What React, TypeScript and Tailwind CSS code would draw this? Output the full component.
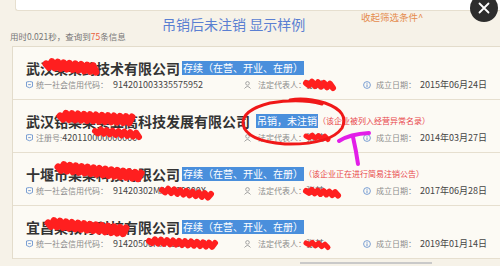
import React from "react";

type Row = {
  name: string;
  tag: string;
  note?: string;
  idLabel: string;
  id: string;
  date: string;
};

const rows: Row[] = [
  {
    name: "武汉某某药技术有限公司",
    tag: "存续（在营、开业、在册）",
    idLabel: "统一社会信用代码：",
    id: "914201003335575952",
    date: "2015年06月24日",
  },
  {
    name: "武汉铭某某实业高科技发展有限公司",
    tag: "吊销，未注销",
    note: "（该企业被列入经营异常名录）",
    idLabel: "注册号: ",
    id: "420110000000000",
    date: "2014年03月27日",
  },
  {
    name: "十堰市某某科技有限公司",
    tag: "存续（在营、开业、在册）",
    note: "（该企业正在进行简易注销公告）",
    idLabel: "统一社会信用代码：",
    id: "91420302MA4000000X",
    date: "2017年06月28日",
  },
  {
    name: "宜昌某教育科技有限公司",
    tag: "存续（在营、开业、在册）",
    idLabel: "统一社会信用代码：",
    id: "91420500MA4000000X",
    date: "2019年01月14日",
  },
];

function zig(x1: number, y1: number, x2: number, y2: number, a: number, step = 3) {
  const n = Math.max(2, Math.round((x2 - x1) / step));
  let d = `M${x1} ${y1}`;
  for (let i = 1; i <= n; i++) {
    const t = i / n;
    const x = x1 + (x2 - x1) * t;
    const y = y1 + (y2 - y1) * t + (i % 2 === 0 ? -a : a);
    d += ` L${x.toFixed(1)} ${y.toFixed(1)}`;
  }
  return d;
}

const scribbles: [string, number][] = [
  [zig(46, 64, 96, 69, 3), 7],
  [zig(306, 83, 333, 86, 2), 6],
  [zig(60, 116, 132, 120, 3), 7],
  [zig(95, 131, 139, 135, 2), 6],
  [zig(306, 136, 328, 138, 1.5), 5],
  [zig(58, 167, 141, 176, 3), 7],
  [zig(162, 190, 211, 196, 2), 6],
  [zig(306, 191, 338, 194, 1.5), 6],
  [zig(48, 223, 126, 231, 3), 7],
  [zig(149, 241, 215, 245, 2), 6],
  [zig(306, 243, 328, 246, 1.5), 5],
];

function IdIcon() {
  return (
    <svg width="7" height="8" viewBox="0 0 7 8" className="shrink-0">
      <path d="M0.5 1 L3.5 0.5 L6.5 1 L6.5 5.5 Q3.5 8 0.5 5.5 Z" fill="none" stroke="#6d95cf" strokeWidth="0.9" />
      <path d="M2.2 3.6 L4.8 3.6" stroke="#6d95cf" strokeWidth="0.9" />
    </svg>
  );
}

function PersonIcon() {
  return (
    <svg width="7" height="8" viewBox="0 0 7 8" className="shrink-0">
      <circle cx="3.5" cy="2.4" r="1.8" fill="none" stroke="#9a9a9a" strokeWidth="0.9" />
      <path d="M0.5 7.5 Q3.5 3.5 6.5 7.5" fill="none" stroke="#9a9a9a" strokeWidth="0.9" />
    </svg>
  );
}

function InfoIcon() {
  return (
    <svg width="8" height="8" viewBox="0 0 8 8" className="shrink-0">
      <circle cx="4" cy="4" r="3.4" fill="none" stroke="#6d95cf" strokeWidth="0.9" />
      <path d="M4 3.4 L4 6" stroke="#6d95cf" strokeWidth="1" />
      <circle cx="4" cy="2.2" r="0.55" fill="#6d95cf" />
    </svg>
  );
}

export default function App() {
  return (
    <div className="relative w-[500px] h-[266px] overflow-hidden bg-[#f6f2e8] font-['Noto_Sans_CJK_SC','Noto_Sans',sans-serif]">
      <div className="ml-[15px] h-[11px] bg-white border-l border-b border-[#e6dfcf] rounded-bl-[3px]" />
      <div className="flex items-start h-[19px]">
        <div className="pl-[162px] pt-[4px] w-[361px] text-[14px] leading-[18px] text-[#5a7fd2] whitespace-nowrap">
          吊销后未注销 显示样例
        </div>
        <div className="text-[9.5px] leading-[12px] text-[#e58c4e] whitespace-nowrap">收起筛选条件^</div>
      </div>
      <div className="pl-[10px] h-[12px] text-[8.5px] leading-[12px] text-[#777] whitespace-nowrap">
        用时0.021秒，查询到<span className="text-[#e8603c]">75</span>条信息
      </div>
      <div className="ml-[12px] mt-[4px] border-t border-l border-[#e3dccb] bg-[#fcfaf4]">
        {rows.map((r, i) => (
          <div key={i} className="h-[53px] border-b border-[#e6dfcf] pl-[13px] pt-[13px]">
            <div className="flex items-center h-[16px] whitespace-nowrap">
              <span className="text-[14px] leading-[16px] font-bold text-[#333]">{r.name}</span>
              <span className={`${i === 1 ? "ml-[6px]" : "ml-[2px]"} bg-[#4a8fdc] text-white text-[10px] leading-[14px] px-[1px]`}>{r.tag}</span>
              {r.note && <span className="text-[8px] leading-[12px] text-[#e8454a]">{r.note}</span>}
            </div>
            <div className="flex items-center h-[12px] mt-[3px] whitespace-nowrap">
              <div className="flex items-center w-[218px]">
                <IdIcon />
                <span className="ml-[3px] text-[8px] text-[#8c8c8c]">{r.idLabel}</span>
                <span className={`${r.idLabel.startsWith("注") ? "ml-0" : "ml-[5px]"} text-[9px] text-[#444]`}>{r.id}</span>
              </div>
              <div className="flex items-center w-[119px]">
                <PersonIcon />
                <span className="ml-[7px] text-[8px] text-[#8c8c8c]">法定代表人：</span>
                <span className="text-[9px] text-[#666]">张某</span>
              </div>
              <div className="flex items-center">
                <InfoIcon />
                <span className="ml-[5px] text-[8px] text-[#8c8c8c]">成立日期：</span>
                <span className="ml-[4px] text-[9px] text-[#444]">{r.date}</span>
              </div>
            </div>
          </div>
        ))}
      </div>
      <div className="absolute left-[300px] top-[262px] w-[132px] h-[2px] bg-[#c9c9c9]" />

      <div className="absolute left-[470px] top-[-6px] w-[28px] h-[28px] rounded-full bg-[#2d2d2d] flex items-center justify-center">
        <svg width="12" height="12" viewBox="0 0 12 12">
          <path d="M1.5 1.5 L10.5 10.5 M10.5 1.5 L1.5 10.5" stroke="white" strokeWidth="1.8" strokeLinecap="round" />
        </svg>
      </div>

      <svg className="absolute inset-0 pointer-events-none" width="500" height="266" viewBox="0 0 500 266">
        {scribbles.map(([d, w], i) => (
          <path key={i} d={d} fill="none" stroke="#ff1f1f" strokeWidth={w} strokeLinecap="round" strokeLinejoin="round" />
        ))}
        <path
          d="M322 104 Q300 98 270 103 Q242 110 243 124 Q246 141 285 144 Q330 145 342 128 Q350 112 325 103 Q305 97 290 100"
          fill="none"
          stroke="#f01818"
          strokeWidth="3"
          strokeLinecap="round"
        />
        <path d="M339 141 Q350 134 369 133" fill="none" stroke="#e21ee8" strokeWidth="4" strokeLinecap="round" />
        <path d="M353 137 Q356 150 358 164" fill="none" stroke="#e21ee8" strokeWidth="4" strokeLinecap="round" />
      </svg>
    </div>
  );
}
